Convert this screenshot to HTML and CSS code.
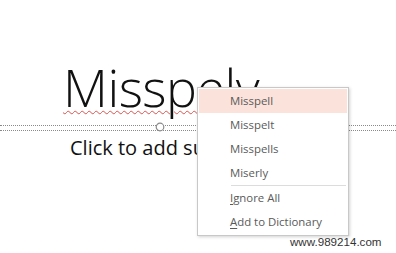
FILE: index.html
```html
<!DOCTYPE html>
<html>
<head>
<meta charset="utf-8">
<link rel="stylesheet" href="styles.css">
</head>
<body>
<div class="slide">
  <div class="title"><span class="squiggle">Misspely</span></div>
  <div class="subtitle">Click to add subtitle</div>
  <svg class="handle" width="10" height="10" viewBox="0 0 10 10"><circle cx="5" cy="5" r="3.8" fill="#fff" stroke="#8a8a8a" stroke-width="1.2"/></svg>
  <div class="menu">
    <div class="item active">Misspell</div>
    <div class="item">Misspelt</div>
    <div class="item">Misspells</div>
    <div class="item">Miserly</div>
    <div class="sep"></div>
    <div class="item"><u>I</u>gnore All</div>
    <div class="item"><u>A</u>dd to Dictionary</div>
  </div>
  <div class="watermark">www.989214.com</div>
</div>
</body>
</html>
```
FILE: styles.css
```css
html, body { margin: 0; padding: 0; background: #fff; }
.slide {
  position: relative;
  width: 396px;
  height: 253px;
  overflow: hidden;
  display: flex;
  flex-direction: column;
  font-family: "Open Sans", "Liberation Sans", sans-serif;
}
.title {
  margin-top: 61px;
  padding-left: 63px;
  padding-bottom: 12px;
  font-size: 52px;
  line-height: 52px;
  font-weight: 350;
  color: #111;
  letter-spacing: -0.5px;
  border-bottom: 1px dotted #8a8a8a;
  white-space: nowrap;
}
.squiggle {
  text-decoration: underline wavy #d9534f;
  text-decoration-thickness: 1px;
  text-underline-offset: 3px;
}
.subtitle {
  margin-top: 4px;
  border-top: 1px dotted #8a8a8a;
  padding-top: 5px;
  padding-left: 70px;
  font-size: 20px;
  line-height: 24px;
  color: #111;
  white-space: nowrap;
}
.handle {
  position: absolute;
  left: 155px;
  top: 122px;
}
.menu {
  position: absolute;
  left: 197px;
  top: 87px;
  width: 148px;
  padding: 1px;
  background: #fff;
  border: 1px solid #c8c8c8;
  box-shadow: 1px 1px 3px rgba(0,0,0,0.18);
  font-family: "Open Sans", "Liberation Sans", sans-serif;
  font-size: 11.4px;
  color: #5a5a5a;
}
.item {
  height: 24px;
  line-height: 24px;
  padding-left: 31px;
}
.item.active { background: #fbe2da; }
.item u { text-underline-offset: 2px; }
.sep {
  height: 1px;
  margin-left: 32px;
  margin-right: 1px;
  background: #dcdcdc;
}
.watermark {
  position: absolute;
  left: 290px;
  top: 235px;
  font-family: "Liberation Sans", sans-serif;
  font-size: 11.6px;
  color: #333;
}
```
